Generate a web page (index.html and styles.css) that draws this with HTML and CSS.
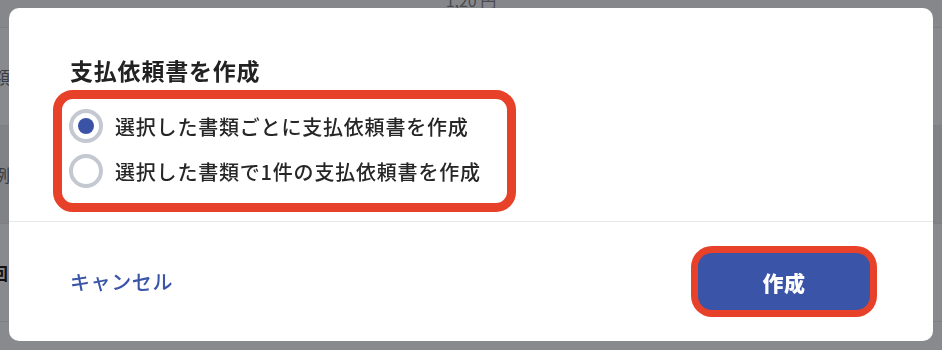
FILE: index.html
```html
<!DOCTYPE html>
<html lang="ja">
<head>
<meta charset="utf-8">
<title>支払依頼書を作成</title>
<link rel="stylesheet" href="styles.css">
</head>
<body>
<div class="page">
  <div class="page-head"><span class="head-text">1,20 円</span></div>
  <div class="page-row"><span class="row-label">金額</span></div>
  <div class="page-row page-row-dark"><span class="row-label">事例</span></div>
  <div class="page-row"><span class="row-label row-label-bold">回</span></div>
  <div class="page-row page-row-last"></div>
</div>

<div class="overlay">
  <div class="modal" role="dialog" aria-labelledby="modal-title">
    <div class="modal-body">
      <h2 class="modal-title" id="modal-title">支払依頼書を作成</h2>
      <div class="radio-group">
        <label class="radio-option">
          <span class="radio radio-checked"></span>
          <span class="radio-text">選択した書類ごとに支払依頼書を作成</span>
        </label>
        <label class="radio-option">
          <span class="radio"></span>
          <span class="radio-text">選択した書類で1件の支払依頼書を作成</span>
        </label>
      </div>
    </div>
    <div class="modal-footer">
      <span class="cancel-link">キャンセル</span>
      <button class="primary-button" type="button">作成</button>
    </div>
  </div>
</div>
</body>
</html>
```

FILE: styles.css
```css
* {
  box-sizing: border-box;
}

html, body {
  margin: 0;
  padding: 0;
}

html {
  overflow: hidden;
}

body {
  width: 942px;
  height: 350px;
  overflow: hidden;
  background: #88898d;
  font-family: "Noto Sans CJK JP", "Noto Sans", sans-serif;
  color: #262626;
}

/* background page (dimmed) */
.page {
  height: 350px;
  overflow: hidden;
  display: flex;
  flex-direction: column;
}

.page-head {
  height: 28px;
  flex-shrink: 0;
  border-bottom: 1px solid #7e7f83;
  background: #86878b;
  display: flex;
  justify-content: center;
  overflow: hidden;
}

.head-text {
  margin-top: -12px;
  font-size: 16px;
  color: #4a4b4e;
}

.page-row {
  height: 98px;
  flex-shrink: 0;
  border-bottom: 1px solid #7e7f83;
  background: #898a8e;
  display: flex;
  align-items: center;
}

.page-row-dark {
  background: #818286;
}

.page-row-last {
  flex: 1;
  height: auto;
  border-bottom: none;
}

.row-label {
  margin-left: -24px;
  font-size: 17px;
  color: #3c3d40;
}

.row-label-bold {
  margin-left: -9px;
  font-weight: 700;
  color: #111;
}

/* modal */
.overlay {
  position: fixed;
  inset: 0;
  display: flex;
  padding: 8px 9px 9px 9px;
}

.modal {
  flex: 1;
  background: #fff;
  border-radius: 10px;
  display: flex;
  flex-direction: column;
  overflow: hidden;
}

.modal-body {
  padding: 46px 0 9px 44px;
  border-bottom: 1px solid #e7e8ec;
}

.modal-title {
  margin: 0 0 4px 17px;
  font-size: 23px;
  line-height: 32px;
  font-weight: 700;
  letter-spacing: 0.8px;
  color: #222;
}

.radio-group {
  width: 463px;
  height: 122px;
  border: 9px solid #e8412a;
  border-radius: 20px;
  padding: 5px 0 0 7px;
  display: flex;
  flex-direction: column;
  gap: 1px;
}

.radio-option {
  height: 44px;
  display: flex;
  align-items: center;
  gap: 12px;
}

.radio {
  width: 34px;
  height: 34px;
  border-radius: 50%;
  border: 4px solid #c4c8d1;
  display: flex;
  align-items: center;
  justify-content: center;
  flex-shrink: 0;
}

.radio-checked::after {
  content: "";
  width: 16px;
  height: 16px;
  border-radius: 50%;
  background: #3a53a7;
}

.radio-text {
  font-size: 20px;
  font-weight: 500;
  letter-spacing: 0.8px;
  color: #262626;
  white-space: nowrap;
}

.modal-footer {
  flex: 1;
  display: flex;
  align-items: center;
  justify-content: space-between;
  padding: 0 63px 0 61px;
}

.cancel-link {
  font-size: 20px;
  font-weight: 500;
  letter-spacing: 0.6px;
  color: #3a55a8;
}

.primary-button {
  width: 172px;
  height: 57px;
  border: none;
  border-radius: 14px;
  background: #3a54a7;
  color: #fff;
  font-family: inherit;
  font-size: 21px;
  font-weight: 900;
  letter-spacing: 0.5px;
  box-shadow: 0 0 0 7px #e8412a;
  cursor: pointer;
}
```
